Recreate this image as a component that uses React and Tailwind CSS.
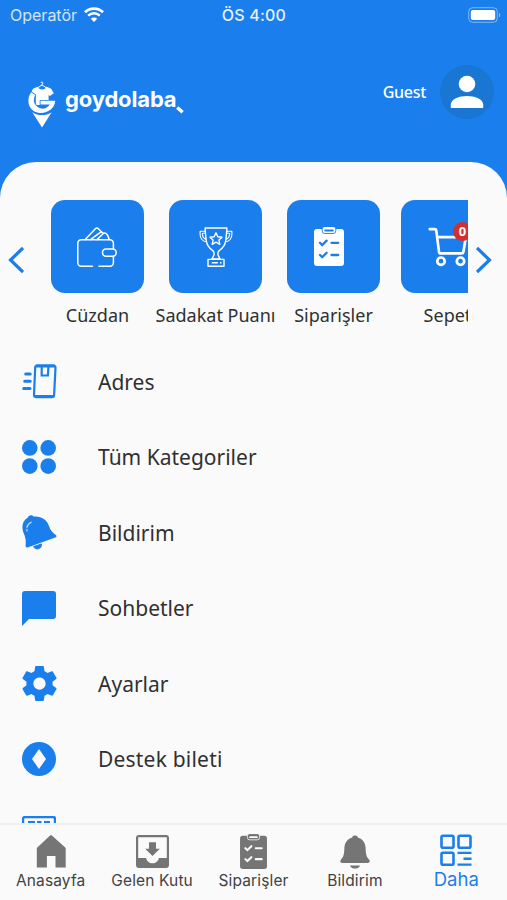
import { clsx } from 'clsx'

function WifiIcon() {
  return (
    <svg width="20" height="16" viewBox="0 0 20 16" fill="none" stroke="white">
      <path d="M1 5.2C6 .4 14 .4 19 5.2" strokeWidth="2.7" />
      <path d="M4.2 8.6c3.4-3.1 8.2-3.1 11.6 0" strokeWidth="2.6" />
      <path d="M10 15 6.8 11.7c1.8-1.7 4.6-1.7 6.4 0Z" fill="white" stroke="none" />
    </svg>
  )
}

function BatteryIcon() {
  return (
    <svg width="33" height="16" viewBox="0 0 33 16" fill="none">
      <rect x=".7" y=".7" width="28.6" height="14.6" rx="4" stroke="white" strokeOpacity=".45" />
      <rect x="2.8" y="3" width="24.4" height="10" rx="2" fill="white" />
      <path d="M31 5.7c1.6.8 1.6 3.8 0 4.6Z" fill="white" fillOpacity=".5" />
    </svg>
  )
}

/* Shirt on a hanger, inside a G that sits on a map pin */
function LogoMark() {
  return (
    <svg width="28" height="47" viewBox="0 0 28 47" fill="none">
      <path d="M14 4.200V3c1.300-.3 1-1.900-.1-1.900-.7 0-1 .4-1 .9M14 4l-5 3.200M14 4l5 3.200" stroke="white" strokeWidth="1" />
      <path d="M9.500 5.800 5 7.800 2.600 12.300l4 2.600 1.200-.8V24h12.800V14.100l1.200.8 4-2.600L23.200 7.800l-4.500-2c-1.800 3.600-7.400 3.600-9.200 0Z" fill="white" />
      <path
        d="M3.200 11.200C-1.500 17.500-.2 26.500 6 30.200c8.500 4.500 20.300.2 21.300-10.400H12.500v3.700h9.300c-2.700 4.500-8.400 5.500-12.400 2.300-4-3.200-4.300-7.600-2.300-11.900Z"
        fill="white"
        stroke="#1b7eed"
        strokeWidth="1.600"
        paintOrder="stroke"
      />
      <path d="M4.300 31.200c5.600 3.800 13.800 3.800 19.400 0L14 46.500Z" fill="white" />
    </svg>
  )
}

function PersonIcon() {
  return (
    <svg width="34" height="34" viewBox="0 0 34 34" fill="white">
      <circle cx="17" cy="9" r="8.3" />
      <path d="M.8 33v-3.4c0-5.4 8.2-8.6 16.2-8.6s16.2 3.2 16.2 8.6V33Z" />
    </svg>
  )
}

function WalletIcon() {
  return (
    <svg width="40" height="42" viewBox="0 0 40 42" fill="none" stroke="white" strokeWidth="1.5" strokeLinecap="round">
      <path d="M15.5 39.2H4.200A3.400 3.400 0 0 1 .8 35.800V16.200a3.400 3.400 0 0 1 3.400-3.400H33a3.400 3.400 0 0 1 3.400 3.400V22M22 39.200H33a3.400 3.400 0 0 0 3.400-3.400V29.500" />
      <rect x="25.500" y="22" width="13.700" height="7.200" rx="3.400" />
      <path d="M8.200 12.600 18.400 1.800c1-1 2-1.100 3-.1l3.600 3.700M13.500 12.600 23 5.600c1-.7 2-.7 2.800.4M20 12.600l6.500-6.300c2.800-1.200 5.300 3 5.500 6.300" />
    </svg>
  )
}

function TrophyIcon() {
  return (
    <svg width="34" height="40" viewBox="0 0 34 40" fill="none" stroke="white" strokeWidth="1.400" strokeLinejoin="round">
      <path d="M6.200 1h21.600v2.200l-1 10.200c-.6 5-3.300 8-6.600 10.200-1.700 1.200-1.700 4.200-.2 6.400l1.200 2H12.800l1.200-2c1.500-2.200 1.500-5.200-.2-6.400-3.300-2.200-6-5.200-6.600-10.200L6.200 3.200Z" />
      <path d="M6.200 4.200H1.100v3c0 4.200 2.500 7.400 6.300 7.500M27.800 4.200h5.100v3c0 4.200-2.500 7.400-6.300 7.500M6.400 6.200H3.300c0 3.200 1 5.200 3.600 6M27.600 6.200h3.100c0 3.200-1 5.200-3.600 6" strokeWidth="1.100" />
      <path d="m17 5.800 1.800 3.900 4.200.5-3.100 2.900.9 4.200-3.800-2.100-3.800 2.100.9-4.200-3.100-2.900 4.200-.5Z" />
      <path d="M9 39.200v-6.800h16v6.800ZM12.800 35.800h6M21 35.800h1.500" />
    </svg>
  )
}

/* Clipboard with two ticked rows, `check` is the colour of the rows */
function ClipboardIcon({ width, height, color, check }) {
  return (
    <svg width={width} height={height} viewBox="0 0 30 39" fill="none">
      <rect x="0" y="2" width="30" height="37" rx="3" fill={color} />
      <rect x="8.200" y="-.5" width="13.600" height="7" rx="2.600" fill={color} stroke={check} strokeWidth=".9" />
      <path d="M11.200 3.500h7.600" stroke={check} strokeWidth="2" strokeLinecap="round" />
      <path d="m6 15.800 2.200 2.200 4.400-4.400M6 28l2.200 2.200 4.400-4.400M17.500 15.800h6.700M17.500 28h6.700" stroke={check} strokeWidth="2.300" strokeLinecap="round" />
    </svg>
  )
}

function CartIcon() {
  return (
    <svg width="40" height="40" viewBox="0 0 40 40" fill="none" stroke="white" strokeWidth="2.700" strokeLinecap="round" strokeLinejoin="round">
      <path d="M1.800 2.200h4.900c.9 0 1.400.5 1.600 1.400l2.700 21.200c.1 1 .8 1.600 1.800 1.600h20.800c1 0 1.600-.6 1.800-1.500l2.400-14.700H9.200" />
      <circle cx="13" cy="34.200" r="3.700" />
      <circle cx="32.500" cy="34.200" r="3.700" />
    </svg>
  )
}

function AddressIcon() {
  return (
    <svg width="35" height="35" viewBox="0 0 35 35" fill="none" stroke="#1b7eed" strokeWidth="2.200">
      <path d="M15.200 1.500h16.300a2 2 0 0 1 2 2.200l-1.400 27.600a2 2 0 0 1-2 1.900H14a2 2 0 0 1-2-2.200l1.200-27.600a2 2 0 0 1 2-1.900Z" />
      <path d="M14 2h19M13 32.300h18.200" strokeWidth="2.800" />
      <path d="M19.700 3v8.500h6.200l.5-8.500" strokeWidth="2.200" />
      <path d="M3.700 10h4.500M2.700 17.300h5.500M1.700 24.500h6.300" strokeWidth="3" strokeLinecap="round" />
    </svg>
  )
}

function CategoriesIcon() {
  return (
    <svg width="34" height="34" viewBox="0 0 34 34" fill="#1b7eed">
      <circle cx="7.800" cy="7.900" r="7.800" />
      <circle cx="26.200" cy="7.900" r="7.800" />
      <circle cx="7.800" cy="26.100" r="7.800" />
      <circle cx="26.200" cy="26.100" r="7.800" />
    </svg>
  )
}

function TiltedBellIcon() {
  return (
    <svg width="35" height="35" viewBox="0 0 35 35" fill="none">
      <path d="M5.600 2.800C6.500.3 9.800-.6 11.600 1.600c8-.6 13 3.200 15.200 8.900 1.700 4.400 2.900 6.500 6.700 9.300 1.400 1 1.200 2.100-.2 2.600L6.200 32.300c-1.900.6-2.700-.3-2.600-1.700.4-5 .2-7.200-1.700-11.900C-.9 11.700.2 6.300 5.600 2.800Z" fill="#1b7eed" />
      <path d="m11.500 31.700 8-2.800c.6 5-5.500 6.800-8 2.800Z" fill="#1b7eed" stroke="#1b7eed" />
      <path d="M5 15.800c-.7-3.800.6-6.900 4.200-8.600" stroke="#c3ddfb" strokeWidth="1.200" strokeLinecap="round" strokeDasharray="1.500 2 12" />
    </svg>
  )
}

function ChatIcon() {
  return (
    <svg width="34" height="35" viewBox="0 0 34 35" fill="#1b7eed">
      <path d="M3 0h28a3 3 0 0 1 3 3v22a3 3 0 0 1-3 3H7l-7 7V3a3 3 0 0 1 3-3Z" />
    </svg>
  )
}

function GearIcon() {
  return (
    <svg width="35" height="35" viewBox="2 2 20 20" fill="#1b7eed">
      <path d="M19.430 12.980c.04-.32.070-.64.070-.98s-.03-.66-.07-.98l2.110-1.650c.19-.15.240-.42.120-.64l-2-3.460c-.12-.22-.39-.3-.61-.22l-2.490 1c-.52-.4-1.080-.73-1.690-.98l-.38-2.650A.488.488 0 0 0 14 2h-4c-.25 0-.46.180-.49.420l-.38 2.650c-.61.250-1.170.590-1.690.980l-2.490-1c-.23-.09-.49 0-.61.220l-2 3.460c-.13.220-.07.490.120.640l2.110 1.650c-.04.320-.07.650-.07.980s.03.660.070.980l-2.110 1.650c-.19.150-.24.420-.12.640l2 3.460c.12.220.39.300.61.220l2.490-1c.52.400 1.080.730 1.690.980l.38 2.650c.03.240.240.420.490.420h4c.25 0 .46-.18.490-.42l.38-2.650c.61-.25 1.170-.59 1.690-.98l2.490 1c.23.090.49 0 .61-.22l2-3.460c.12-.22.070-.49-.12-.64zM12 15.500c-1.930 0-3.500-1.570-3.500-3.500s1.570-3.500 3.500-3.500 3.500 1.570 3.500 3.500-1.570 3.500-3.500 3.500z" />
    </svg>
  )
}

function SupportIcon() {
  return (
    <svg width="34" height="34" viewBox="0 0 34 34">
      <circle cx="17" cy="17" r="17" fill="#1b7eed" />
      <path d="m17 7 7 10-7 10-7-10Z" fill="#fafafa" />
    </svg>
  )
}

function BlogIcon() {
  return (
    <svg width="34" height="34" viewBox="0 0 34 34" fill="none" stroke="#1b7eed" strokeWidth="2">
      <rect x="1" y="1" width="32" height="32" rx="2" strokeWidth="2.400" />
      <path d="M6 6h7M15 6h4.500M22 6h6M10 6v5M15.500 11l2-4.500M22.500 7v4" strokeWidth="2.200" />
    </svg>
  )
}

function HomeIcon() {
  return (
    <svg width="30" height="33" viewBox="0 0 30 33" fill="#757575">
      <path d="M15 .2c.3 0 .6.100.9.400L29.200 12.500c.3.300.5.700.5 1.100V32.500H19.500V21h-8.600v11.500H.8V13.600c0-.4.2-.8.500-1.100L14.100.6c.3-.3.600-.4.900-.4Z" />
    </svg>
  )
}

function InboxIcon() {
  return (
    <svg width="33" height="33" viewBox="3 3 18 18" fill="#757575">
      <path d="M16 10.500h-2.100V7h-3.800v3.500H8l4 4zM19.500 3h-15C3.700 3 3 3.700 3 4.500v15c0 .8.700 1.500 1.500 1.500h15c.8 0 1.500-.7 1.500-1.500v-15c0-.8-.7-1.500-1.500-1.500m.3 12.500H15.500c-.3 1.700-1.700 2.900-3.500 2.900s-3.200-1.200-3.500-2.900H4.200V4.200h15.600z" />
    </svg>
  )
}

function BellIcon() {
  return (
    <svg width="30" height="34" viewBox="0 0 30 34" fill="#757575">
      <path d="M12.200 2.400c.3-2.600 5.300-2.600 5.600 0 5.200 1.500 7.600 5.700 7.800 10.600.2 6.200.8 8.700 3.200 11.300 1.700 1.900.9 3.700-1.300 3.700h-25C.3 28-.5 26.200 1.200 24.300 3.600 21.700 4.200 19.200 4.400 13c.2-4.900 2.600-9.100 7.800-10.600ZM10 30.400h10c-1 4.200-9 4.200-10 0Z" />
    </svg>
  )
}

function MoreIcon() {
  return (
    <svg width="32" height="32" viewBox="0 0 32 32" fill="none" stroke="#1b7eed" strokeWidth="2.600">
      <rect x="1.500" y="1.700" width="12" height="12" rx="1.500" />
      <rect x="18.500" y="1.700" width="12" height="12" rx="1.500" />
      <rect x="1.500" y="18.700" width="12" height="12" rx="1.500" />
      <path d="M17.500 18.900h14M23.500 24.700h8M17.500 30.600h14" strokeWidth="2.400" />
    </svg>
  )
}

function Chevron({ d }) {
  return (
    <svg width="16" height="28" viewBox="0 0 16 28" fill="none" stroke="#1b7eed" strokeWidth="3.200">
      <path d={d} />
    </svg>
  )
}

const shortcuts = [
  { icon: <WalletIcon />, label: 'Cüzdan', iconClass: 'pt-[2px] pr-[1px]' },
  { icon: <TrophyIcon />, label: 'Sadakat Puanı', iconClass: 'pt-[1px]' },
  { icon: <ClipboardIcon width={30} height={39} color="white" check="#1b7eed" />, label: 'Siparişler', iconClass: 'pr-[9px]' },
  { icon: <CartIcon />, label: 'Sepet', iconClass: '', badge: '0' },
]

const menu = [
  { icon: <AddressIcon />, label: 'Adres' },
  { icon: <CategoriesIcon />, label: 'Tüm Kategoriler' },
  { icon: <TiltedBellIcon />, label: 'Bildirim' },
  { icon: <ChatIcon />, label: 'Sohbetler' },
  { icon: <GearIcon />, label: 'Ayarlar' },
  { icon: <SupportIcon />, label: 'Destek bileti', labelClass: 'tracking-[0.2px]' },
]

const tabs = [
  { icon: <HomeIcon />, label: 'Anasayfa' },
  { icon: <InboxIcon />, label: 'Gelen Kutu' },
  { icon: <ClipboardIcon width={27} height={35} color="#757575" check="#fafafa" />, label: 'Siparişler' },
  { icon: <BellIcon />, label: 'Bildirim' },
  { icon: <MoreIcon />, label: 'Daha', active: true },
]

function Header() {
  return (
    <header className="h-[162px] shrink-0 text-white">
      <div className="grid h-[30px] grid-cols-3 items-center pl-[10px] pr-[6px] font-[Inter,sans-serif] text-[16px]">
        <div className="flex items-center gap-[7px]">
          <span className="opacity-80">Operatör</span>
          <WifiIcon />
        </div>
        <span className="pr-[3px] text-center font-medium tracking-[0.2px] opacity-90">ÖS 4:00</span>
        <div className="flex justify-end">
          <BatteryIcon />
        </div>
      </div>
      <div className="flex items-center pl-7 pr-[13px] pt-[35px]">
        <div className="flex h-[54px] items-center pt-6">
          <LogoMark />
          <span className="ml-[9px] pb-[10px] font-[Inter,sans-serif] text-[22px] font-bold tracking-[-0.15px]">goydolaba</span>
          <svg className="mt-[11px]" width="8" height="8" viewBox="0 0 8 8" stroke="white" strokeWidth="3.500">
            <path d="m1.200 1.500 5.400 4.800" />
          </svg>
        </div>
        <span className="ml-auto mr-[14px] text-[16px] font-medium tracking-[-0.3px]">Guest</span>
        <div className="flex h-[54px] w-[54px] items-center justify-center rounded-full bg-[#1976d2]">
          <PersonIcon />
        </div>
      </div>
    </header>
  )
}

function Shortcuts() {
  return (
    <div className="flex shrink-0 pt-[38px]">
      <div className="w-[39px] shrink-0 pl-[8px] pt-[46px]">
        <Chevron d="M15 2 2.500 14 15 26" />
      </div>
      <div className="flex h-[132px] w-[429px] shrink-0 overflow-hidden pl-3">
        {shortcuts.map((item, idx) => (
          <div
            key={item.label}
            className={clsx('flex w-[93px] shrink-0 flex-col items-center', idx < 2 && 'mr-[25px]', idx === 2 && 'mr-[21px]')}
          >
            <div className={clsx('relative flex h-[93px] w-[93px] shrink-0 items-center justify-center rounded-[14px] bg-[#1b7eed]', item.iconClass)}>
              {item.icon}
              {item.badge && (
                <span className="absolute left-[52px] top-[22px] flex h-[19px] w-[19px] items-center justify-center rounded-full bg-[#d32f2f] text-[13px] font-bold text-white">
                  {item.badge}
                </span>
              )}
            </div>
            <span className="mt-[9px] whitespace-nowrap text-[18px] leading-[26px]">{item.label}</span>
          </div>
        ))}
      </div>
      <div className="pl-[8px] pt-[46px]">
        <Chevron d="M1 2l12.500 12L1 26" />
      </div>
    </div>
  )
}

function TabBar() {
  return (
    <nav className="grid h-[77px] shrink-0 grid-cols-5 border-t-2 border-[#f0f0f0] bg-[#fafafa] font-[Inter,sans-serif]">
      {tabs.map((tab) => (
        <div key={tab.label} className="flex flex-col items-center pt-[8px]">
          <div className={clsx('flex items-center justify-center', tab.active ? 'h-[34px]' : 'h-[37px]')}>{tab.icon}</div>
          <span
            className={clsx(
              'whitespace-nowrap',
              tab.active ? 'text-[18.500px] leading-[24px] text-[#1b7eed]' : 'text-[15.500px] leading-[22px] tracking-[0.15px] text-[#424242]'
            )}
          >
            {tab.label}
          </span>
        </div>
      ))}
    </nav>
  )
}

export default function App() {
  return (
    <div className="flex h-[900px] w-[507px] flex-col overflow-hidden bg-[#1b7eed] font-['Noto_Sans',sans-serif] text-[#303030]">
      <Header />
      <main className="flex min-h-0 flex-1 flex-col overflow-hidden rounded-t-[36px] bg-[#fafafa]">
        <Shortcuts />
        <ul className="mt-[12px] shrink-0">
          {menu.map((item) => (
            <li key={item.label} className="flex h-[75.500px] items-center pl-[22px]">
              <div className="w-[76px]">{item.icon}</div>
              <span className={clsx('text-[21px] leading-[30px]', item.labelClass)}>{item.label}</span>
            </li>
          ))}
          {/* next row only peeks out above the tab bar */}
          <li className="flex h-[72px] items-center pl-[22px]">
            <BlogIcon />
          </li>
        </ul>
      </main>
      <TabBar />
    </div>
  )
}
